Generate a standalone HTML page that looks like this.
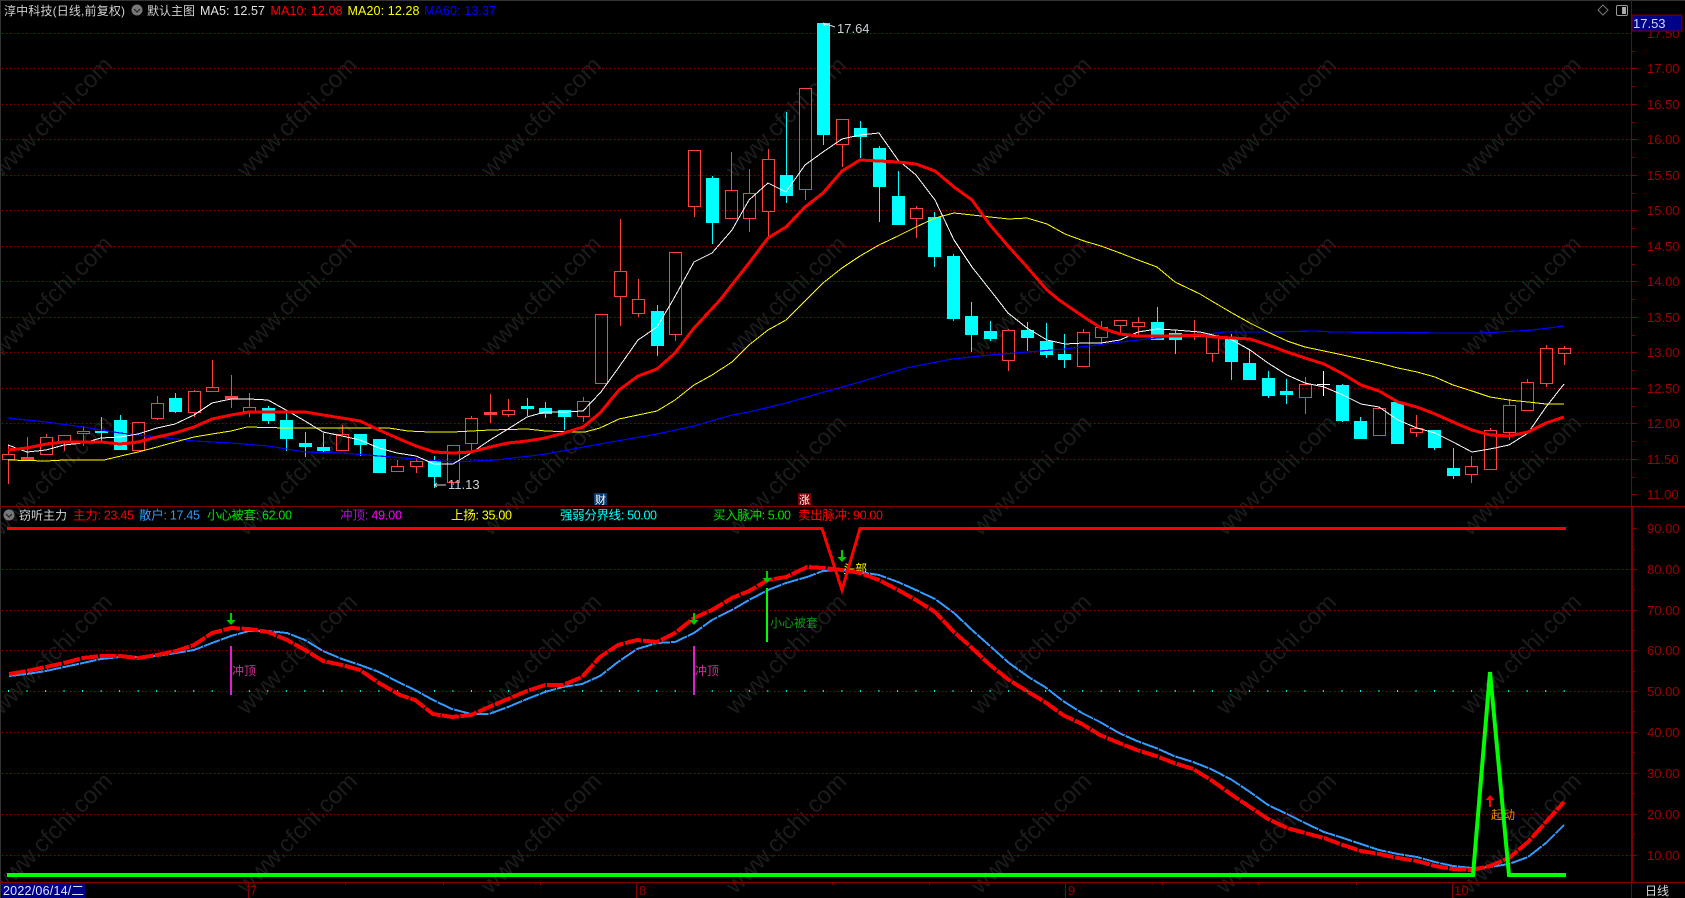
<!DOCTYPE html>
<html lang="zh"><head><meta charset="utf-8"><title>淳中科技</title>
<style>
html,body{margin:0;padding:0;background:#000;width:1685px;height:898px;overflow:hidden}
svg{display:block;font-family:"Liberation Sans","Noto Sans CJK SC",sans-serif;font-size:12.5px}
.wm text{font-size:24px;fill:#1c1c1c;text-anchor:middle}
.ax{fill:#a00000;font-size:13px}
.l{fill:none;shape-rendering:crispEdges}
</style></head><body>
<svg width="1685" height="898" viewBox="0 0 1685 898" xmlns="http://www.w3.org/2000/svg">
<rect width="1685" height="898" fill="#000"/>
<g class="wm">
<text x="52" y="125" transform="rotate(-45 52 117)">www.cfchi.com</text><text x="297" y="125" transform="rotate(-45 297 117)">www.cfchi.com</text><text x="541" y="125" transform="rotate(-45 541 117)">www.cfchi.com</text><text x="786" y="125" transform="rotate(-45 786 117)">www.cfchi.com</text><text x="1031" y="125" transform="rotate(-45 1031 117)">www.cfchi.com</text><text x="1276" y="125" transform="rotate(-45 1276 117)">www.cfchi.com</text><text x="1521" y="125" transform="rotate(-45 1521 117)">www.cfchi.com</text>
<text x="52" y="304" transform="rotate(-45 52 296)">www.cfchi.com</text><text x="297" y="304" transform="rotate(-45 297 296)">www.cfchi.com</text><text x="541" y="304" transform="rotate(-45 541 296)">www.cfchi.com</text><text x="786" y="304" transform="rotate(-45 786 296)">www.cfchi.com</text><text x="1031" y="304" transform="rotate(-45 1031 296)">www.cfchi.com</text><text x="1276" y="304" transform="rotate(-45 1276 296)">www.cfchi.com</text><text x="1521" y="304" transform="rotate(-45 1521 296)">www.cfchi.com</text>
<text x="52" y="483" transform="rotate(-45 52 475)">www.cfchi.com</text><text x="297" y="483" transform="rotate(-45 297 475)">www.cfchi.com</text><text x="541" y="483" transform="rotate(-45 541 475)">www.cfchi.com</text><text x="786" y="483" transform="rotate(-45 786 475)">www.cfchi.com</text><text x="1031" y="483" transform="rotate(-45 1031 475)">www.cfchi.com</text><text x="1276" y="483" transform="rotate(-45 1276 475)">www.cfchi.com</text><text x="1521" y="483" transform="rotate(-45 1521 475)">www.cfchi.com</text>
<text x="52" y="662" transform="rotate(-45 52 654)">www.cfchi.com</text><text x="297" y="662" transform="rotate(-45 297 654)">www.cfchi.com</text><text x="541" y="662" transform="rotate(-45 541 654)">www.cfchi.com</text><text x="786" y="662" transform="rotate(-45 786 654)">www.cfchi.com</text><text x="1031" y="662" transform="rotate(-45 1031 654)">www.cfchi.com</text><text x="1276" y="662" transform="rotate(-45 1276 654)">www.cfchi.com</text><text x="1521" y="662" transform="rotate(-45 1521 654)">www.cfchi.com</text>
<text x="52" y="841" transform="rotate(-45 52 833)">www.cfchi.com</text><text x="297" y="841" transform="rotate(-45 297 833)">www.cfchi.com</text><text x="541" y="841" transform="rotate(-45 541 833)">www.cfchi.com</text><text x="786" y="841" transform="rotate(-45 786 833)">www.cfchi.com</text><text x="1031" y="841" transform="rotate(-45 1031 833)">www.cfchi.com</text><text x="1276" y="841" transform="rotate(-45 1276 833)">www.cfchi.com</text><text x="1521" y="841" transform="rotate(-45 1521 833)">www.cfchi.com</text>
</g>
<!-- borders -->
<path d="M0 .5H1685M.5 0V898" stroke="#333" fill="none" shape-rendering="crispEdges"/>
<!-- grid -->
<path d="M2 33.5H1631M2 68.5H1631M2 104.5H1631M2 139.5H1631M2 175.5H1631M2 210.5H1631M2 246.5H1631M2 281.5H1631M2 317.5H1631M2 352.5H1631M2 388.5H1631M2 423.5H1631M2 459.5H1631M2 569.5H1631M2 610.5H1631M2 650.5H1631M2 691.5H1631M2 732.5H1631M2 773.5H1631M2 814.5H1631M2 855.5H1631" stroke="#8a0000" stroke-dasharray="1 3" fill="none" shape-rendering="crispEdges"/>
<line x1="8" y1="691" x2="1566" y2="691" stroke="#0ff" stroke-width="2" stroke-dasharray="1 17.52"/>
<!-- axis -->
<path d="M0 506.5H1685M0 882.5H1632M1631.5 0V898M1632.5 506V882M1632 882.5H1685M1632 68.5h5M1632 104.5h5M1632 139.5h5M1632 175.5h5M1632 210.5h5M1632 246.5h5M1632 281.5h5M1632 317.5h5M1632 352.5h5M1632 388.5h5M1632 423.5h5M1632 459.5h5M1632 494.5h5M1632 51.5h3M1632 86.5h3M1632 122.5h3M1632 157.5h3M1632 193.5h3M1632 228.5h3M1632 264.5h3M1632 299.5h3M1632 335.5h3M1632 370.5h3M1632 406.5h3M1632 441.5h3M1632 477.5h3M1632 528.5h5M1632 569.5h5M1632 610.5h5M1632 650.5h5M1632 691.5h5M1632 732.5h5M1632 773.5h5M1632 814.5h5M1632 855.5h5M1632 549.5h3M1632 589.5h3M1632 630.5h3M1632 671.5h3M1632 711.5h3M1632 752.5h3M1632 793.5h3M1632 834.5h3M248.5 882V898M636.5 882V898M1065.5 882V898M1452.5 882V898M345.5 882v3M443.5 882v3M540.5 882v3M734.5 882v3M832.5 882v3M929.5 882v3M1162.5 882v3M1258.5 882v3M1356.5 882v3" stroke="#800000" fill="none" shape-rendering="crispEdges"/>
<!-- red candles -->
<path shape-rendering="crispEdges" fill="none" stroke="#ff4040" d="M8.5 445V454M8.5 459V484M2.5 454.5h12V459.5h-12zM27.5 437V457M21.5 457.5h12V459.5h-12zM46.5 434V437M46.5 454V455M40.5 437.5h12V454.5h-12zM64.5 442V451M58.5 435.5h12V442.5h-12zM83.5 426V431M83.5 433V446M77.5 431.5h12V433.5h-12zM132.5 422.5h12V450.5h-12zM157.5 396V403M157.5 418V420M151.5 403.5h12V418.5h-12zM194.5 390V391M194.5 412V417M188.5 391.5h12V412.5h-12zM212.5 360V387M206.5 387.5h12V391.5h-12zM231.5 375V396M231.5 398V408M225.5 396.5h12V398.5h-12zM249.5 393V407M249.5 411V417M243.5 407.5h12V411.5h-12zM342.5 425V434M336.5 434.5h12V450.5h-12zM397.5 460V466M391.5 466.5h12V471.5h-12zM416.5 458V461M416.5 466V473M410.5 461.5h12V466.5h-12zM453.5 482V485M447.5 445.5h12V482.5h-12zM471.5 416V418M471.5 443V452M465.5 418.5h12V443.5h-12zM490.5 394V412M490.5 414V423M484.5 412.5h12V414.5h-12zM508.5 399V410M508.5 414V417M502.5 410.5h12V414.5h-12zM583.5 397V401M583.5 416V422M577.5 401.5h12V416.5h-12zM595.5 314.5h12V383.5h-12zM620.5 219V271M620.5 296V326M614.5 271.5h12V296.5h-12zM638.5 279V299M638.5 313V317M632.5 299.5h12V313.5h-12zM675.5 334V341M669.5 252.5h12V334.5h-12zM694.5 206V217M688.5 150.5h12V206.5h-12zM731.5 152V190M725.5 190.5h12V218.5h-12zM749.5 169V193M749.5 218V232M743.5 193.5h12V218.5h-12zM768.5 149V159M768.5 211V238M762.5 159.5h12V211.5h-12zM805.5 189V200M799.5 88.5h12V189.5h-12zM842.5 144V167M836.5 119.5h12V144.5h-12zM916.5 206V208M916.5 218V238M910.5 208.5h12V218.5h-12zM1008.5 329V330M1008.5 360V371M1002.5 330.5h12V360.5h-12zM1083.5 329V332M1077.5 332.5h12V366.5h-12zM1101.5 321V327M1101.5 337V345M1095.5 327.5h12V337.5h-12zM1120.5 325V334M1114.5 320.5h12V325.5h-12zM1138.5 317V322M1138.5 326V335M1132.5 322.5h12V326.5h-12zM1194.5 320V334M1194.5 336V340M1188.5 334.5h12V336.5h-12zM1212.5 353V362M1206.5 335.5h12V353.5h-12zM1305.5 377V384M1305.5 397V414M1299.5 384.5h12V397.5h-12zM1373.5 408.5h12V435.5h-12zM1416.5 415V428M1416.5 432V437M1410.5 428.5h12V432.5h-12zM1471.5 456V466M1471.5 474V483M1465.5 466.5h12V474.5h-12zM1490.5 428V430M1484.5 430.5h12V469.5h-12zM1509.5 399V405M1509.5 432V440M1503.5 405.5h12V432.5h-12zM1527.5 379V382M1521.5 382.5h12V410.5h-12zM1546.5 345V348M1546.5 383V387M1540.5 348.5h12V383.5h-12zM1564.5 346V348M1564.5 353V365M1558.5 348.5h12V353.5h-12z"/>
<path shape-rendering="crispEdges" fill="#ff4040" d="M21 457h13v3H21zM225 396h13v3H225zM484 412h13v3H484z"/>
<!-- cyan candles -->
<path shape-rendering="crispEdges" fill="#0ff" stroke="#0ff" d="M101.5 417V443M95.5 431.5h12V432.5h-12zM120.5 415V449M114.5 420.5h12V449.5h-12zM175.5 393V413M169.5 398.5h12V411.5h-12zM268.5 406V424M262.5 408.5h12V420.5h-12zM286.5 413V451M280.5 420.5h12V438.5h-12zM305.5 432V457M299.5 443.5h12V446.5h-12zM323.5 433V452M317.5 447.5h12V450.5h-12zM360.5 434V456M354.5 434.5h12V444.5h-12zM379.5 439V473M373.5 439.5h12V472.5h-12zM434.5 456V488M428.5 461.5h12V476.5h-12zM527.5 398V416M521.5 406.5h12V408.5h-12zM545.5 402V418M539.5 408.5h12V413.5h-12zM564.5 410V430M558.5 410.5h12V416.5h-12zM657.5 305V356M651.5 311.5h12V345.5h-12zM712.5 176V244M706.5 178.5h12V222.5h-12zM786.5 112V203M780.5 175.5h12V195.5h-12zM823.5 23V145M817.5 23.5h12V134.5h-12zM860.5 121V158M854.5 128.5h12V136.5h-12zM879.5 146V222M873.5 148.5h12V186.5h-12zM898.5 171V225M892.5 196.5h12V224.5h-12zM934.5 212V267M928.5 217.5h12V256.5h-12zM953.5 254V321M947.5 256.5h12V318.5h-12zM971.5 302V352M965.5 316.5h12V334.5h-12zM990.5 321V341M984.5 331.5h12V338.5h-12zM1027.5 322V351M1021.5 330.5h12V337.5h-12zM1046.5 323V358M1040.5 341.5h12V354.5h-12zM1064.5 334V368M1058.5 354.5h12V359.5h-12zM1157.5 307V340M1151.5 322.5h12V339.5h-12zM1175.5 330V354M1169.5 333.5h12V339.5h-12zM1231.5 334V380M1225.5 339.5h12V361.5h-12zM1249.5 349V379M1243.5 363.5h12V379.5h-12zM1268.5 371V398M1262.5 378.5h12V395.5h-12zM1286.5 379V404M1280.5 391.5h12V394.5h-12zM1342.5 384V422M1336.5 385.5h12V420.5h-12zM1360.5 417V438M1354.5 421.5h12V438.5h-12zM1397.5 402V443M1391.5 402.5h12V443.5h-12zM1434.5 430V450M1428.5 430.5h12V447.5h-12zM1453.5 448V479M1447.5 468.5h12V475.5h-12z"/>
<path shape-rendering="crispEdges" stroke="#fff" fill="none" d="M1323.5 371V396M1317 384.5h13"/>
<!-- MA lines -->
<polyline class="l" stroke="#0000ff" stroke-width="1.2" points="8,418 46,422 83,427 120,433 138,435 157,437 194,441 231,443 268,446 305,452 342,453 379,456 416,459 453,462 497,460 546,454 600,444 657,434 694,426 732,415 749,412 786,403 824,392 860,382 906,368 952,359 990,355 1027,352 1065,349 1120,342 1157,338 1200,335 1225,332 1268,332 1315,331 1333,332 1445,333 1480,333 1500,332 1533,330 1564,326"/>
<polyline class="l" stroke="#ffff00" stroke-width="1" points="8,460 46,461 64,460 94,460 104,460 138,452 157,447 175,442 194,437 212,434 231,431 247,427 287,428 342,428 389,428 408,431 430,432 453,432 490,430 527,429 546,431 574,432 585,432 600,428 619,419 638,415 657,411 675,400 694,385 712,375 732,362 749,345 768,330 786,320 807,299 823,283 842,268 860,256 879,245 898,236 916,227 935,218 954,213 972,215 990,217 1009,219 1027,218 1047,224 1065,234 1084,241 1101,246 1120,253 1138,260 1157,267 1175,282 1200,294 1210,300 1232,313 1250,323 1268,332 1287,341 1305,347 1324,351 1343,355 1361,359 1379,363 1398,368 1417,372 1435,377 1453,385 1472,391 1490,397 1509,400 1528,402 1546,404 1564,404"/>
<polyline class="l" stroke="#ffffff" stroke-width="1" points="8,445 27,452 46,450 64,445 83,443 101,438 120,437 138,434 157,428 175,424 194,415 212,403 231,399 249,399 268,400 286,410 305,421 323,432 342,436 360,440 379,448 397,453 416,456 434,464 453,464 471,453 490,440 508,429 527,417 545,412 564,412 583,411 601,392 619,367 638,340 657,327 673,300 694,262 712,253 732,230 749,200 768,183 786,192 805,165 823,152 842,139 860,135 879,133 898,160 916,175 935,200 954,240 972,267 998,300 1008,313 1027,328 1047,340 1065,344 1084,343 1101,343 1120,340 1138,332 1157,329 1175,330 1200,332 1213,335 1232,340 1250,350 1268,363 1287,375 1305,383 1324,387 1343,395 1361,404 1379,407 1398,420 1417,428 1435,433 1453,442 1472,452 1490,449 1509,445 1528,433 1546,407 1564,384"/>
<polyline class="l" stroke="#ff0000" stroke-width="3" points="8,450 27,448 46,444 64,442 83,442 101,442 120,444 138,442 157,437 175,433 194,427 212,419 231,415 249,412 268,412 286,412 305,412 323,415 342,418 360,421 379,430 397,438 416,446 434,452 453,453 471,452 490,447 508,443 527,441 545,438 564,433 583,427 600,413 619,390 638,376 657,369 675,353 694,328 720,300 749,263 768,238 786,227 805,207 823,193 842,171 860,160 879,161 898,162 916,164 935,171 954,187 972,200 990,225 1009,247 1027,267 1047,290 1059,300 1084,317 1101,328 1120,334 1138,336 1157,336 1175,336 1200,335 1213,337 1232,338 1250,339 1268,345 1287,352 1305,358 1324,364 1343,374 1361,385 1379,391 1398,402 1417,407 1435,414 1453,422 1472,430 1490,435 1509,436 1528,432 1546,423 1564,417"/>
<!-- price marks -->
<path d="M823 23l12 4M823 23l3 2M823 23l2 3M446 485H434M434 485l3-2M434 485l3 2" stroke="#ddd" fill="none"/>
<text x="837" y="33" fill="#c8d0d8" font-size="13">17.64</text>
<text x="448" y="489" fill="#c8d0d8" font-size="13">11.13</text>
<!-- signal labels (under lines) -->
<text x="232" y="675" fill="#d03090" font-size="12">冲顶</text>
<text x="695" y="675" fill="#d03090" font-size="12">冲顶</text>
<text x="770" y="627" fill="#109a10" font-size="12">小心被套</text>
<text x="843" y="573" fill="#ffff00" font-size="12">头部</text>
<text x="1491" y="819" fill="#e89000" font-size="12">起动</text>
<!-- indicator lines -->
<polyline class="l" stroke="#ff0000" stroke-width="3" points="7,528.5 822,528.5 842,590 860,528.5 1566,528.5"/>
<polyline class="l" stroke="#3399ff" stroke-width="2" stroke-dasharray="17 1" points="9,676 27,674 46,671 64,667 83,663 101,659 120,657 138,657 157,656 176,653 194,650 212,643 231,636 249,631 268,631 287,633 305,640 323,651 342,659 360,665 379,672 400,683 415,690 433,700 452,709 471,714 489,714 508,707 527,699 545,692 563,687 582,684 600,676 618,662 637,649 657,643 675,642 694,633 712,620 732,610 749,600 768,590 786,583 807,577 823,571 842,570 860,572 879,575 898,582 916,590 935,599 954,613 972,630 990,646 1009,663 1030,678 1045,687 1063,701 1082,713 1100,722 1119,733 1137,741 1156,748 1174,756 1193,762 1211,769 1232,780 1250,792 1268,805 1287,814 1305,823 1324,832 1343,838 1361,844 1379,850 1398,854 1417,857 1435,862 1453,866 1472,868 1490,867 1509,864 1528,857 1546,843 1564,825"/>
<polyline class="l" stroke="#ff0000" stroke-width="4" stroke-dasharray="17 1.5" points="9,674 27,671 46,667 64,663 83,658 101,656 120,656 138,658 157,655 176,651 194,645 212,633 231,628 249,629 268,632 287,640 305,650 323,661 342,665 360,670 379,683 400,695 415,700 433,714 452,717 471,715 489,707 508,699 527,691 545,685 563,685 582,677 600,657 618,645 637,640 657,642 675,633 694,618 712,610 732,598 749,591 768,580 786,577 807,567 823,568 842,570 860,573 879,580 898,590 916,600 935,612 954,632 972,648 990,665 1009,680 1030,693 1045,702 1063,715 1082,724 1100,735 1119,743 1137,750 1156,756 1174,763 1193,769 1211,780 1232,795 1250,807 1268,819 1287,828 1305,833 1324,838 1343,845 1361,851 1379,854 1398,858 1417,861 1435,866 1453,869 1472,870 1490,866 1509,858 1528,842 1546,822 1564,802"/>
<polyline fill="none" stroke="#00ff00" stroke-width="4" points="7,875 1473,875 1490,672 1509,875 1566,875"/>
<!-- signals -->
<path d="M231 646V695M694 646V695" stroke="#e020d0" stroke-width="2"/>
<path d="M767 588V642" stroke="#00ff00" stroke-width="2"/>
<path fill="#00cc00" d="M230 613h2v7h3.5l-4.5 5-4.500-5h3.500zM693 613h2v7h3.500l-4.500 5-4.500-5h3.500zM766 571h2v7h3.500l-4.500 5-4.500-5h3.500zM841 550h2v7h3.500l-4.500 5-4.500-5h3.500z"/>
<path fill="#ff0000" d="M1489 807h2v-7h3.500l-4.500-5-4.500 5h3.500z"/>
<!-- badges -->
<rect x="594" y="493" width="13" height="12" fill="#0a3a6a"/><text x="595" y="503.500" fill="#fff" font-size="11">财</text>
<rect x="798" y="493" width="13" height="12" fill="#800000"/><text x="799" y="503.500" fill="#fff" font-size="11">涨</text>
<!-- header -->
<text x="4" y="15" fill="#d0d0d0" font-size="12" textLength="121">淳中科技(日线,前复权)</text>
<circle cx="137" cy="10" r="5.500" fill="#777"/><path d="M134 9l3 3 3-3" stroke="#222" fill="none" stroke-width="1.200"/>
<text x="147" y="15" fill="#d0d0d0" font-size="12">默认主图</text>
<text x="200" y="15" fill="#e0e0e0" textLength="65">MA5: 12.57</text>
<text x="270.500" y="15" fill="#ff0000" textLength="72">MA10: 12.08</text>
<text x="347.500" y="15" fill="#ffff00" textLength="72">MA20: 12.28</text>
<text x="424" y="15" fill="#0000ff" textLength="72">MA60: 13.37</text>
<path d="M1603 5l5 5-5 5-5-5z" fill="none" stroke="#777"/>
<rect x="1616.500" y="5.500" width="11" height="10" rx="1.500" fill="none" stroke="#999"/><rect x="1622" y="7" width="4" height="7" fill="#aaa"/>
<!-- legend -->
<circle cx="9" cy="515" r="5.500" fill="#777"/><path d="M6 514l3 3 3-3" stroke="#222" fill="none" stroke-width="1.200"/>
<text x="19" y="519.500" fill="#d8d8d8" font-size="12">窃听主力</text>
<text x="73" y="519.500" fill="#ff0000" textLength="61">主力: 23.45</text>
<text x="139" y="519.500" fill="#3399ff" textLength="61">散户: 17.45</text>
<text x="207" y="519.500" fill="#00e000" textLength="85">小心被套: 62.00</text>
<text x="340" y="519.500" textLength="62"><tspan fill="#b010e0">冲顶: </tspan><tspan fill="#ff00ff">49.00</tspan></text>
<text x="451" y="519.500" fill="#ffff00" textLength="61">上扬: 35.00</text>
<text x="560" y="519.500" fill="#00ffff" textLength="97">强弱分界线: 50.00</text>
<text x="713" y="519.500" fill="#00e000" textLength="78">买入脉冲: 5.00</text>
<text x="798" y="519.500" fill="#ff0000" textLength="85">卖出脉冲: 90.00</text>
<!-- axis labels -->
<g class="ax">
<text x="1647" y="38">17.50</text>
<text x="1647" y="73">17.00</text><text x="1647" y="109">16.50</text><text x="1647" y="144">16.00</text><text x="1647" y="180">15.50</text><text x="1647" y="215">15.00</text><text x="1647" y="251">14.50</text><text x="1647" y="286">14.00</text><text x="1647" y="322">13.50</text><text x="1647" y="357">13.00</text><text x="1647" y="393">12.50</text><text x="1647" y="428">12.00</text><text x="1647" y="464">11.50</text><text x="1647" y="499">11.00</text>
<text x="1647" y="533">90.00</text><text x="1647" y="574">80.00</text><text x="1647" y="615">70.00</text><text x="1647" y="655">60.00</text><text x="1647" y="696">50.00</text><text x="1647" y="737">40.00</text><text x="1647" y="778">30.00</text><text x="1647" y="819">20.00</text><text x="1647" y="860">10.00</text>
<text x="250" y="895">7</text><text x="639" y="895">8</text><text x="1068" y="895">9</text><text x="1454" y="895">10</text>
</g>
<rect x="1632" y="15" width="50" height="16" fill="#000088" stroke="#800000" stroke-width="1"/>
<text x="1633" y="28" fill="#d0d8ff" font-size="13">17.53</text>
<rect x="2" y="883" width="83" height="15" fill="#000088"/>
<text x="3" y="895" fill="#e0e4ff" font-size="12.500" textLength="81">2022/06/14/二</text>
<text x="1645" y="895" fill="#d8d8d8" font-size="12">日线</text>
</svg>
</body></html>
